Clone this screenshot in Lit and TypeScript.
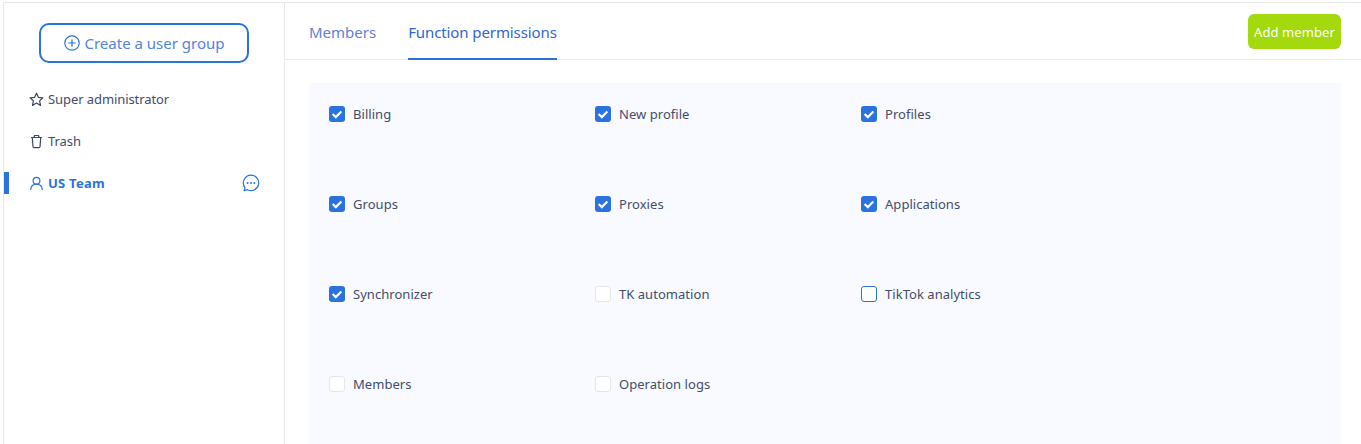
import { LitElement, html, css, svg } from "lit";
import { customElement } from "lit/decorators.js";

const perms: [string, "on" | "off" | "hover"][] = [
  ["Billing", "on"], ["New profile", "on"], ["Profiles", "on"],
  ["Groups", "on"], ["Proxies", "on"], ["Applications", "on"],
  ["Synchronizer", "on"], ["TK automation", "off"], ["TikTok analytics", "hover"],
  ["Members", "off"], ["Operation logs", "off"],
];

const check = svg`<svg width="16" height="16" viewBox="0 0 16 16" fill="none"><path d="M3.600 8 6.800 11.100 12.400 5.400" stroke="#fff" stroke-width="2.200"/></svg>`;

@customElement("app-root")
export class AppRoot extends LitElement {
  static styles = css`
    :host { display: block; height: 444px; overflow: hidden; background: #fff; font-family: "Noto Sans", sans-serif; color: #434d6b; font-size: 13px; }
    .frame { margin: 2px 0 0 3px; height: 442px; box-sizing: border-box; border-top: 1px solid #e8e8e8; border-left: 1px solid #e8e8e8; display: flex; }
    .side { width: 281px; flex: none; box-sizing: border-box; border-right: 1px solid #e8e8e8; display: flex; flex-direction: column; }
    .create { margin: 20px 0 0 35px; width: 210px; height: 40px; box-sizing: border-box; border: 2px solid #2a72de; border-radius: 10px; display: flex; align-items: center; justify-content: center; gap: 4px; padding-left: 1px; color: #4f84e2; font-size: 15px; }
    .menu { margin-top: 25px; display: flex; flex-direction: column; gap: 20px; }
    .item { height: 22px; position: relative; display: flex; align-items: center; gap: 4px; padding-left: 25px; }
    .item .label { letter-spacing: -0.08px; }
    .item.active { color: #2a72de; font-weight: 700; }
    .item.active .label { letter-spacing: 0.25px; }
    .item.active::before { content: ""; position: absolute; left: 0; top: 0; width: 5px; height: 22px; background: #2a72de; }
    .more { position: absolute; left: 238px; top: 2px; }
    .main { flex: 1; min-width: 0; display: flex; flex-direction: column; }
    .head { height: 57px; flex: none; box-sizing: border-box; border-bottom: 1px solid #ececec; display: flex; padding: 0 20px 0 24px; gap: 32px; }
    .tab { height: 57px; box-sizing: border-box; font-size: 15px; color: #5f80da; padding-top: 19px; line-height: 20px; }
    .tab.active { color: #2f66d2; border-bottom: 2px solid #2a72de; letter-spacing: -0.1px; }
    .add { margin-left: auto; margin-top: 11px; height: 35px; width: 93px; background: #a3d90d; color: #fff; border-radius: 6px; display: flex; align-items: center; justify-content: center; font-size: 13px; letter-spacing: 0.1px; }
    .panel { margin: 23px 20px 0 24px; flex: 1; background: #f8faff; padding: 0 20px; display: grid; grid-template-columns: repeat(3, 266px); grid-auto-rows: 90px; }
    .perm { display: flex; align-items: flex-start; gap: 8px; padding-top: 22px; height: 18px; line-height: 18px; letter-spacing: 0.04px; }
    .box { width: 16px; height: 16px; box-sizing: border-box; border-radius: 3px; flex: none; margin-top: 1px; }
    .box.on { background: #2a72de; }
    .box.off { background: #fff; border: 1px solid #e4e6ea; }
    .box.hover { background: #fff; border: 1px solid #2a72de; }
  `;

  render() {
    return html`<div class="frame">
      <aside class="side">
        <div class="create">
          <svg width="16" height="16" viewBox="0 0 16 16" fill="none" stroke="#2a72de" stroke-width="1.2"><circle cx="8" cy="8" r="7.2"/><path d="M8 4.2v7.6M4.2 8h7.6"/></svg>
          <span>Create a user group</span>
        </div>
        <nav class="menu">
          <div class="item">
            <svg width="15" height="15" viewBox="0 0 15 15" fill="none" stroke="#3a4563" stroke-width="1.2" stroke-linejoin="round"><path d="M7.5 1.2 9.4 5.3l4.5.5-3.3 3.1.9 4.5-4-2.3-4 2.3.9-4.500L1.100 5.800l4.500-.5z"/></svg>
            <span class="label">Super administrator</span>
          </div>
          <div class="item">
            <svg width="15" height="15" viewBox="0 0 15 15" fill="none" stroke="#3a4563" stroke-width="1.2" stroke-linejoin="round"><path d="M2 3.500h11M3.300 3.500l.7 9.300a1 1 0 0 0 1 .9h5a1 1 0 0 0 1-.9l.7-9.300M5 3.500 5.500 1.500h4L10 3.500"/></svg>
            <span class="label">Trash</span>
          </div>
          <div class="item active">
            <svg width="15" height="15" viewBox="0 0 15 15" fill="none" stroke="#2a72de" stroke-width="1.2"><circle cx="7.5" cy="4.700" r="3.400"/><path d="M1.600 14c.3-3.500 2.700-5.900 5.900-5.900s5.600 2.400 5.900 5.900"/></svg>
            <span class="label">US Team</span>
            <svg class="more" width="18" height="18" viewBox="0 0 18 18" fill="none"><path d="M9 1.200a7.700 7.700 0 1 1-3.600 14.500l-3.300.9.900-3A7.700 7.700 0 0 1 9 1.200z" stroke="#2a72de" stroke-width="1.200" stroke-linejoin="round"/><g fill="#2a72de"><circle cx="5.600" cy="9" r="1"/><circle cx="9" cy="9" r="1"/><circle cx="12.400" cy="9" r="1"/></g></svg>
          </div>
        </nav>
      </aside>
      <main class="main">
        <header class="head">
          <div class="tab">Members</div>
          <div class="tab active">Function permissions</div>
          <div class="add">Add member</div>
        </header>
        <section class="panel">
          ${perms.map(([name, st]) => html`<div class="perm"><span class="box ${st}">${st === "on" ? check : ""}</span><span>${name}</span></div>`)}
        </section>
      </main>
    </div>`;
  }
}
